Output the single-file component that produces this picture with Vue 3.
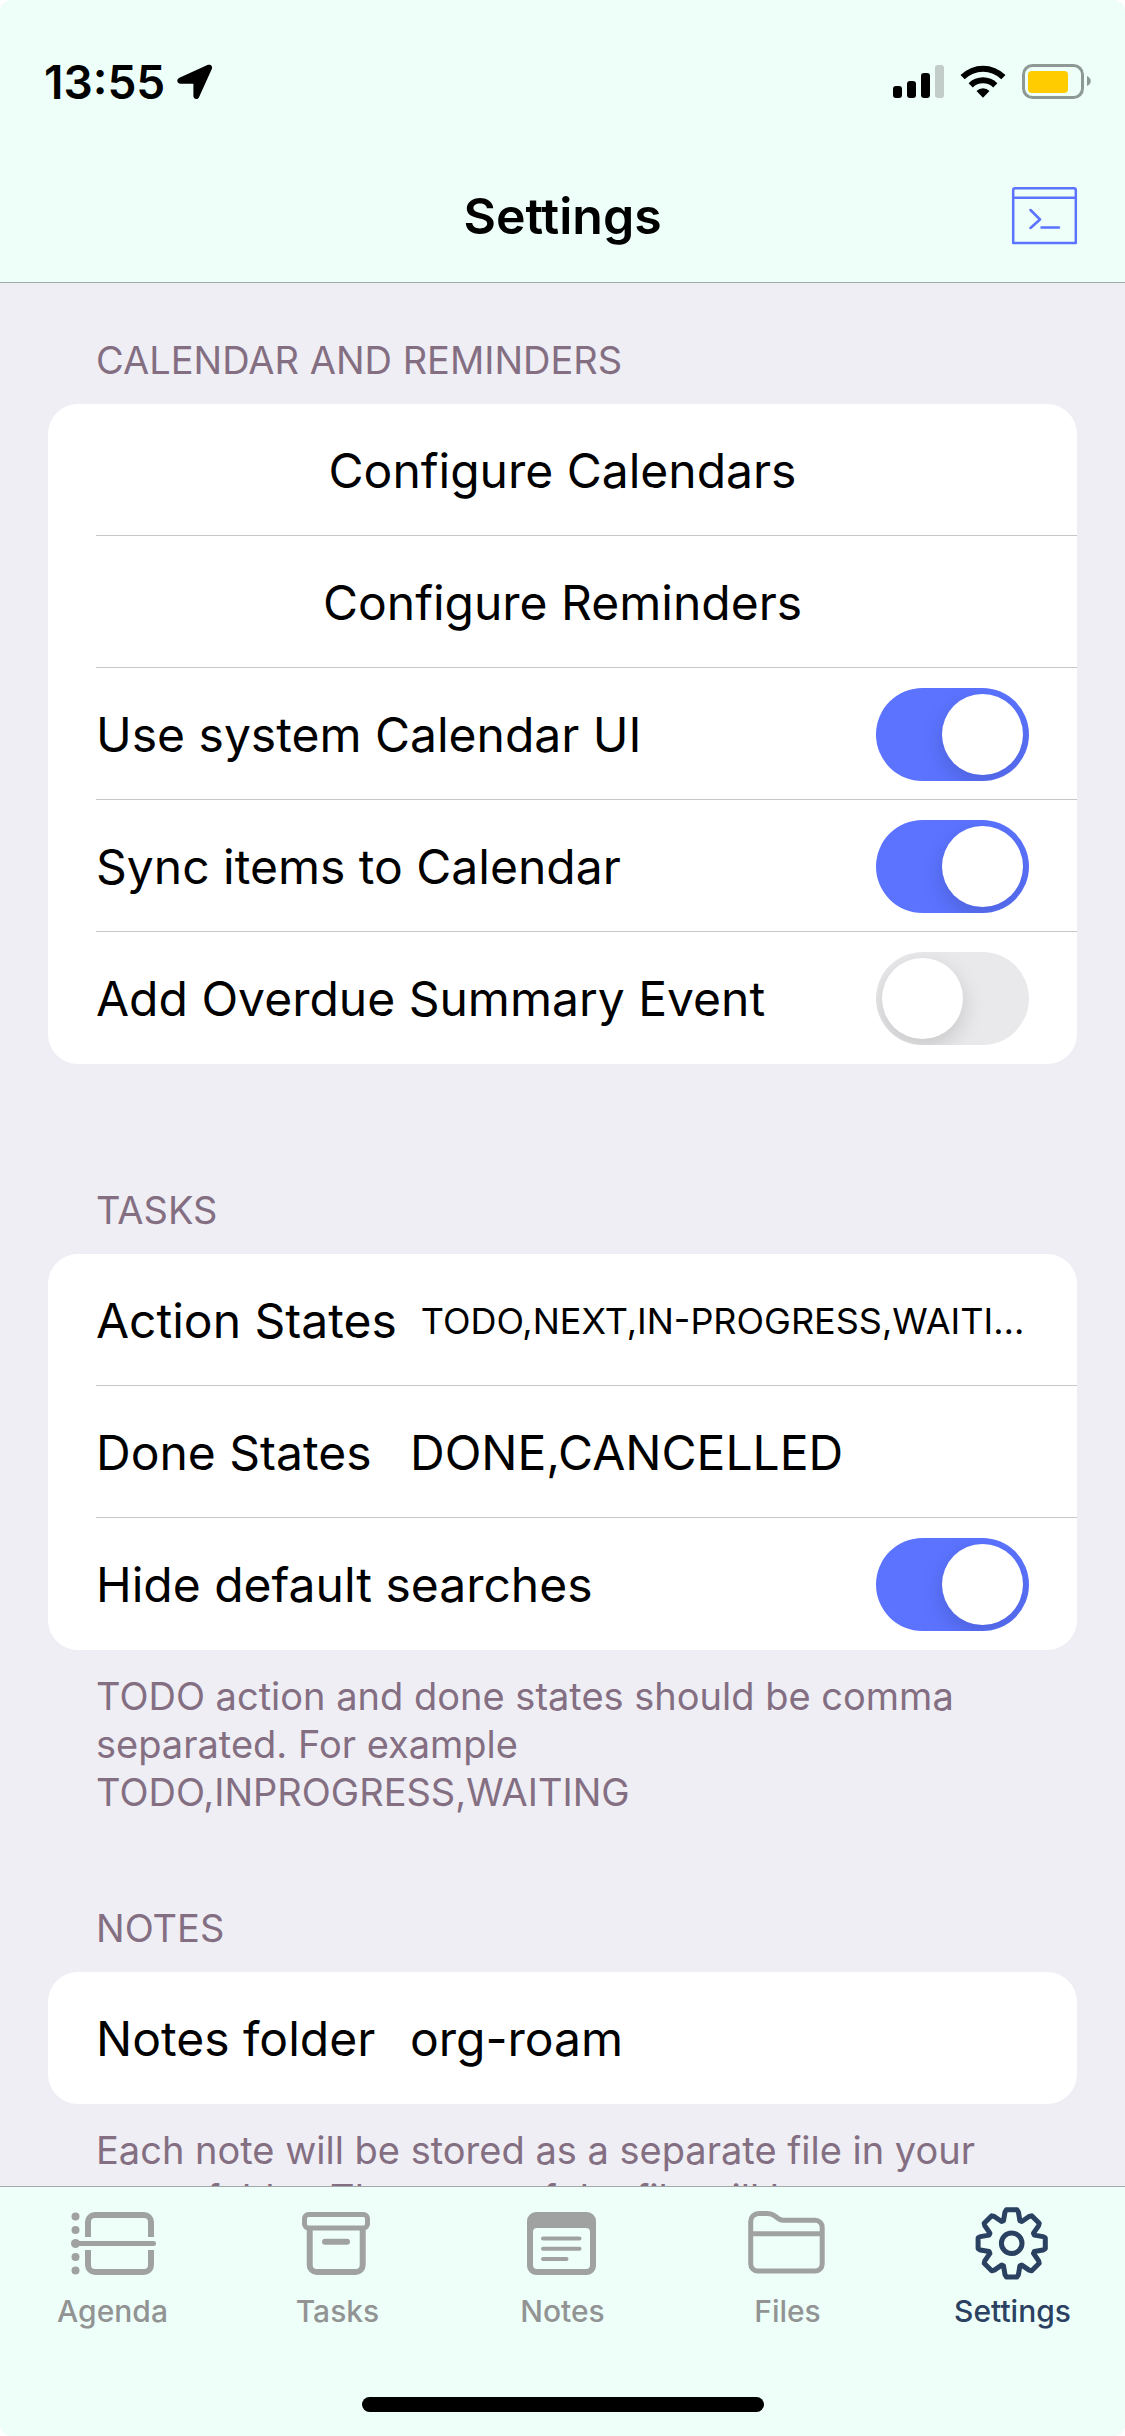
<script setup>
import { reactive, ref } from 'vue'

const settings = reactive({
  systemCalendar: true,
  syncItems: true,
  overdueSummary: false,
  actionStates: 'TODO,NEXT,IN-PROGRESS,WAITING,SOMEDAY',
  doneStates: 'DONE,CANCELLED',
  hideSearches: true,
  notesFolder: 'org-roam',
})

const calendarToggles = [
  { key: 'systemCalendar', label: 'Use system Calendar UI' },
  { key: 'syncItems', label: 'Sync items to Calendar' },
  { key: 'overdueSummary', label: 'Add Overdue Summary Event' },
]

const tabs = ['Agenda', 'Tasks', 'Notes', 'Files', 'Settings']
const current = ref('Settings')

// Eight-toothed gear outline: rounded tooth corners and one valley between teeth.
function gear(cx, cy) {
  const at = (r, deg) => {
    const a = (deg * Math.PI) / 180
    return `${(cx + r * Math.sin(a)).toFixed(1)},${(cy - r * Math.cos(a)).toFixed(1)}`
  }
  const points = []
  for (let i = 0; i < 8; i++) {
    const d = i * 45
    points.push(at(32, d - 12), at(34, d - 9), at(34, d + 9), at(32, d + 12), at(24, d + 20), at(24, d + 25))
  }
  return points.join(' ')
}
const gearPoints = gear(41.7, 37.3)
</script>

<template>
  <div class="app">
    <header class="top">
      <div class="status">
        <div class="clock">
          <span>13:55</span>
          <svg width="36" height="36" viewBox="0 0 36 36" aria-hidden="true">
            <path d="M30.4 1.1C33.4-.2 36 2 34.8 5L22 33.2c-1.400 3-5.600 2.200-5.600-1.200V19.800H3.600C-.1 19.800-.9 15.200 2.400 13.800Z" fill="#000" />
          </svg>
        </div>
        <svg width="198" height="36" viewBox="0 0 198 36" aria-hidden="true">
          <rect x="0" y="22" width="9" height="12" rx="3" />
          <rect x="14" y="17" width="9" height="17" rx="3" />
          <rect x="28" y="9" width="9" height="25" rx="3" />
          <rect x="42" y="1" width="9" height="33" rx="3" fill="#c2ccc9" />
          <path d="M67.500 11 A32 32 0 0 1 112.500 11 L108.300 15.300 A26 26 0 0 0 71.700 15.300Z" />
          <path d="M75.600 19.200 A20.500 20.500 0 0 1 104.400 19.200 L100.200 23.400 A14.500 14.500 0 0 0 79.800 23.400Z" />
          <path d="M83.500 27 A9.200 9.200 0 0 1 96.500 27 L90 33.800Z" />
          <rect x="130.500" y="1.500" width="59" height="32" rx="9" fill="none" stroke="#8e9996" stroke-width="3" />
          <rect x="135" y="7" width="40" height="22" rx="4" fill="#ffcc00" />
          <path d="M194 12c5 2 5 8 0 10z" fill="#8e9996" />
        </svg>
      </div>
      <div class="nav">
        <h1>Settings</h1>
        <button class="console" type="button" aria-label="Open console">
          <svg width="65" height="58" viewBox="0 0 65 58" fill="none" stroke="#5b73ff" stroke-width="2.500" stroke-linecap="round" stroke-linejoin="round">
            <path d="M1.200 56V3.200q0-2 2-2h58.600q2 0 2 2V56z" />
            <path d="M1.200 10.800h62.600M18.500 23l9.500 9.500-9.500 8.500M29.500 40.500h17.500" />
          </svg>
        </button>
      </div>
    </header>

    <main class="content">
      <section>
        <h2>CALENDAR AND REMINDERS</h2>
        <div class="card">
          <button class="row action" type="button">Configure Calendars</button>
          <button class="row action" type="button">Configure Reminders</button>
          <label v-for="item in calendarToggles" :key="item.key" class="row">
            <span>{{ item.label }}</span>
            <input v-model="settings[item.key]" class="switch" type="checkbox" />
          </label>
        </div>
      </section>

      <section>
        <h2>TASKS</h2>
        <div class="card">
          <label class="row field">
            <span class="name">Action States</span>
            <input v-model="settings.actionStates" class="value small" type="text" />
          </label>
          <label class="row field">
            <span class="name">Done States</span>
            <input v-model="settings.doneStates" class="value" type="text" />
          </label>
          <label class="row">
            <span>Hide default searches</span>
            <input v-model="settings.hideSearches" class="switch" type="checkbox" />
          </label>
        </div>
        <p>TODO action and done states should be comma separated. For example TODO,INPROGRESS,WAITING</p>
      </section>

      <section>
        <h2>NOTES</h2>
        <div class="card">
          <label class="row field">
            <span class="name">Notes folder</span>
            <input v-model="settings.notesFolder" class="value" type="text" />
          </label>
        </div>
        <p>Each note will be stored as a separate file in your notes folder. The name of the file will be</p>
      </section>
    </main>

    <footer class="bottom">
      <nav class="tabs">
        <button
          v-for="tab in tabs"
          :key="tab"
          class="tab"
          :class="{ active: tab === current }"
          type="button"
          @click="current = tab"
        >
          <svg width="85" height="76" viewBox="0 0 85 76" fill="none" stroke="currentColor" stroke-width="6" aria-hidden="true">
            <template v-if="tab === 'Agenda'">
              <g fill="currentColor" stroke="none">
                <circle cx="5.500" cy="10.500" r="4" />
                <circle cx="5.500" cy="24" r="4" />
                <circle cx="5.500" cy="37.500" r="4.500" />
                <circle cx="5.500" cy="51" r="4" />
                <circle cx="5.500" cy="64.500" r="4" />
              </g>
              <path d="M18 31V16a7 7 0 0 1 7-7h49a7 7 0 0 1 7 7v15M18 44v15a7 7 0 0 0 7 7h49a7 7 0 0 0 7-7V44" />
              <path d="M6 37.500h77.500" stroke-width="5" stroke-linecap="round" />
            </template>
            <template v-else-if="tab === 'Tasks'">
              <rect x="9.500" y="8.500" width="63" height="13.500" rx="4" stroke-width="5" />
              <path d="M14.700 23v36a7 7 0 0 0 7 7h39a7 7 0 0 0 7-7V23" />
              <path d="M30 35.700h22" stroke-linecap="round" />
            </template>
            <template v-else-if="tab === 'Notes'">
              <path
                d="M16 6h51a9 9 0 0 1 9 9v45a9 9 0 0 1-9 9H16a9 9 0 0 1-9-9V15a9 9 0 0 1 9-9zM17 22a4 4 0 0 0-4 4v33a4 4 0 0 0 4 4h49a4 4 0 0 0 4-4V26a4 4 0 0 0-4-4z"
                fill="currentColor"
                fill-rule="evenodd"
                stroke="none"
              />
              <path d="M23 32.400h36.500M23 42.700h36.500M23 53h23.500" stroke-width="4" stroke-linecap="round" />
            </template>
            <template v-else-if="tab === 'Files'">
              <path d="M5.700 58V15.500a8 8 0 0 1 8-8h9c3 0 4.500.5 6.500 2l4 3q2 1.700 5 1.700h32a7 7 0 0 1 7 7V58a7 7 0 0 1-7 7H12.700a7 7 0 0 1-7-7zM5.700 27.700h71.500" stroke-width="5" />
            </template>
            <template v-else>
              <polygon :points="gearPoints" stroke-width="5" stroke-linejoin="round" />
              <circle cx="41.700" cy="37.300" r="10.300" stroke-width="5" />
            </template>
          </svg>
          <span>{{ tab }}</span>
        </button>
      </nav>
      <div class="home"></div>
    </footer>
  </div>
</template>

<style>
body {
  background: #fff;
}
</style>

<style scoped>
.app {
  display: flex;
  flex-direction: column;
  height: 100vh;
  overflow: hidden;
  border-radius: 12px;
  background: #efeef5;
  color: #000;
  font-family: Inter, "Liberation Sans", sans-serif;
  font-size: 48px;
  line-height: 62px;
}

button,
input {
  margin: 0;
  padding: 0;
  border: 0;
  background: none;
  color: inherit;
  font: inherit;
}

svg {
  display: block;
  overflow: visible;
}

.top {
  flex: none;
  border-bottom: 1px solid #a3a8a9;
  background: #eefff9;
}

.status {
  display: flex;
  align-items: center;
  justify-content: space-between;
  height: 164px;
  padding: 0 34px 0 44px;
}

.clock {
  display: flex;
  align-items: center;
  gap: 12px;
  font-size: 46px;
  font-weight: 600;
}

.nav {
  display: grid;
  grid-template-columns: 1fr auto 1fr;
  align-items: center;
  height: 118px;
  box-sizing: border-box;
  padding: 0 48px 14px;
}

.nav h1 {
  grid-column: 2;
  margin: 0;
  font-size: 50px;
  font-weight: 600;
}

.console {
  justify-self: end;
}

.content {
  flex: 1;
  min-height: 0;
  overflow-y: auto;
  padding: 53px 48px 0;
  scrollbar-width: none;
}

section {
  margin-bottom: 88px;
}

section:first-child {
  margin-bottom: 122px;
}

h2,
p {
  margin: 0 48px;
  color: #846f82;
  font-size: 38px;
  font-weight: 400;
  line-height: 48px;
}

h2 {
  margin-bottom: 20px;
}

p {
  margin-top: 22px;
}

.card {
  padding-left: 48px;
  border-radius: 30px;
  background: #fff;
}

.row {
  display: flex;
  align-items: center;
  justify-content: space-between;
  width: 100%;
  height: 132px;
  box-sizing: border-box;
  padding: 2px 48px 0 0;
  border-bottom: 1px solid #c6c6c8;
}

.row:last-child {
  border-bottom-color: transparent;
}

.action {
  justify-content: center;
}

.field {
  gap: 24px;
}

.name {
  flex: none;
  min-width: 290px;
}

.value {
  flex: 1;
  min-width: 0;
  outline: none;
  text-overflow: ellipsis;
}

.small {
  font-size: 36px;
}

.switch {
  flex: none;
  width: 153px;
  height: 93px;
  box-sizing: border-box;
  padding: 6px;
  border-radius: 47px;
  background: #e9e9eb;
  appearance: none;
  overflow: hidden;
}

.switch::before {
  content: "";
  display: block;
  width: 81px;
  height: 81px;
  border-radius: 50%;
  background: #fff;
  box-shadow: 0 8px 22px rgba(0, 0, 0, 0.15);
}

.switch:checked {
  background: #5b73ff;
}

.switch:checked::before {
  margin-left: auto;
}

.bottom {
  flex: none;
  border-top: 1px solid #a3a8a9;
  background: #eefff9;
}

.tabs {
  display: flex;
  padding-top: 19px;
}

.tab {
  display: flex;
  flex: 1;
  flex-direction: column;
  align-items: center;
  gap: 11px;
  color: #929494;
  font-size: 30px;
  font-weight: 500;
  line-height: 36px;
}

.tab svg {
  color: #a0a2a1;
}

.tab.active,
.tab.active svg {
  color: #2b4162;
}

.home {
  width: 402px;
  height: 15px;
  margin: 68px auto 24px;
  border-radius: 8px;
  background: #000;
}
</style>
